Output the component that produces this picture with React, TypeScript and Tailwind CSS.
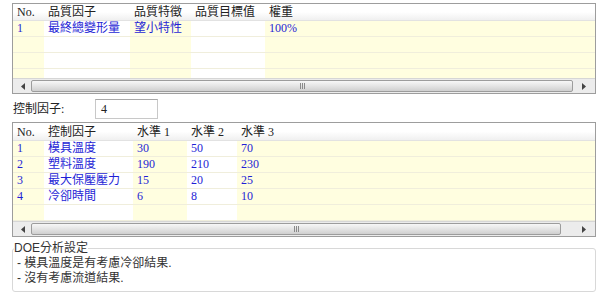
import React from "react";

type Col = { title: string; w?: string };

const FONT = "font-['Liberation_Serif','Noto_Sans_CJK_TC',serif]";

function Arrow({ dir }: { dir: "l" | "r" }) {
    return (
        <svg width="4" height="7" viewBox="0 0 4 7">
            {dir === "l" ? <path d="M4 0 L0 3.5 L4 7 Z" fill="#444" /> : <path d="M0 0 L4 3.5 L0 7 Z" fill="#444" />}
        </svg>
    );
}

function ScrollBar({ rightW }: { rightW: string }) {
    return (
        <div className="flex h-[15px] bg-[#ececec] border-t border-[#d6d6d6]">
            <div className="w-[18px] flex items-center justify-center pl-[1px]">
                <Arrow dir="l" />
            </div>
            <div className="flex-1 my-[1px] rounded-[2px] border border-[#9c9c9c] bg-gradient-to-b from-[#f7f7f7] via-[#e4e4e4] to-[#cfcfcf] flex items-center justify-center gap-[1px]">
                <div className="w-[1px] h-[6px] bg-[#8a8a8a]" />
                <div className="w-[1px] h-[6px] bg-[#8a8a8a]" />
                <div className="w-[1px] h-[6px] bg-[#8a8a8a]" />
            </div>
            <div className={`${rightW} flex items-center justify-end pr-[9px]`}>
                <Arrow dir="r" />
            </div>
        </div>
    );
}

function Grid({
    cols,
    rows,
    headH,
    bodyH,
    rightW,
}: {
    cols: Col[];
    rows: string[][];
    headH: string;
    bodyH: string;
    rightW: string;
}) {
    return (
        <div className={`border border-[#9d9d9d] flex flex-col ${FONT} text-[12px]`}>
            <div className={`flex ${headH} bg-gradient-to-b from-white via-white to-[#f0f0f0] border-b border-[#e2e2e2] text-[#222]`}>
                {cols.map((c, i) => (
                    <div key={i} className={`${c.w ?? "flex-1"} pl-[4px] flex items-center whitespace-nowrap`}>
                        {c.title}
                    </div>
                ))}
            </div>
            <div className={`${bodyH} overflow-hidden flex flex-col text-[#1f1fd6]`}>
                {rows.map((r, ri) => (
                    <div key={ri} className="flex h-[16px] shrink-0">
                        {cols.map((c, ci) => (
                            <div
                                key={ci}
                                className={`${c.w ?? "flex-1"} ${ci % 2 === 0 ? "bg-[#fffee0]" : "bg-white"} border-b border-[#f0eedc] pl-[4px] leading-[15px] whitespace-nowrap`}
                            >
                                {r[ci] ?? ""}
                            </div>
                        ))}
                    </div>
                ))}
            </div>
            <ScrollBar rightW={rightW} />
        </div>
    );
}

export default function App() {
    const qualityCols: Col[] = [
        { title: "No.", w: "w-[31px]" },
        { title: "品質因子", w: "w-[86px]" },
        { title: "品質特徵", w: "w-[61px]" },
        { title: "品質目標值", w: "w-[74px]" },
        { title: "權重" },
    ];
    const qualityRows = [["1", "最終總變形量", "望小特性", "", "100%"], [], [], [], []];

    const factorCols: Col[] = [
        { title: "No.", w: "w-[31px]" },
        { title: "控制因子", w: "w-[89px]" },
        { title: "水準 1", w: "w-[54px]" },
        { title: "水準 2", w: "w-[50px]" },
        { title: "水準 3" },
    ];
    const factorRows = [
        ["1", "模具溫度", "30", "50", "70"],
        ["2", "塑料溫度", "190", "210", "230"],
        ["3", "最大保壓壓力", "15", "20", "25"],
        ["4", "冷卻時間", "6", "8", "10"],
        [],
    ];

    return (
        <div className={`w-[602px] h-[298px] bg-white pl-[12px] pr-[6px] pt-[3px] ${FONT} text-[12px] text-[#222] overflow-hidden`}>
            <Grid cols={qualityCols} rows={qualityRows} headH="h-[17px]" bodyH="h-[57px]" rightW="w-[22px]" />

            <div className="flex items-center mt-[5px] h-[20px]">
                <div className="w-[83px] pl-[1px]">控制因子:</div>
                <div className="w-[63px] h-[20px] border border-[#c8c8c8] border-t-[#a8a8a8] bg-white pl-[5px] leading-[18px]">4</div>
            </div>

            <div className="mt-[3px]">
                <Grid cols={factorCols} rows={factorRows} headH="h-[18px]" bodyH="h-[80px]" rightW="w-[34px]" />
            </div>

            <fieldset className="mt-[5px] h-[50px] border border-[#d8d8d8] rounded-[3px] pl-[4px] pr-0 font-['Liberation_Sans','Noto_Sans_CJK_TC',sans-serif] text-[12px] text-[#333]">
                <legend className="-ml-[3px] px-0 leading-[12px]">DOE分析設定</legend>
                <div className="leading-[15px] mt-[2px]">- 模具溫度是有考慮冷卻結果.</div>
                <div className="leading-[15px]">- 沒有考慮流道結果.</div>
            </fieldset>
        </div>
    );
}
